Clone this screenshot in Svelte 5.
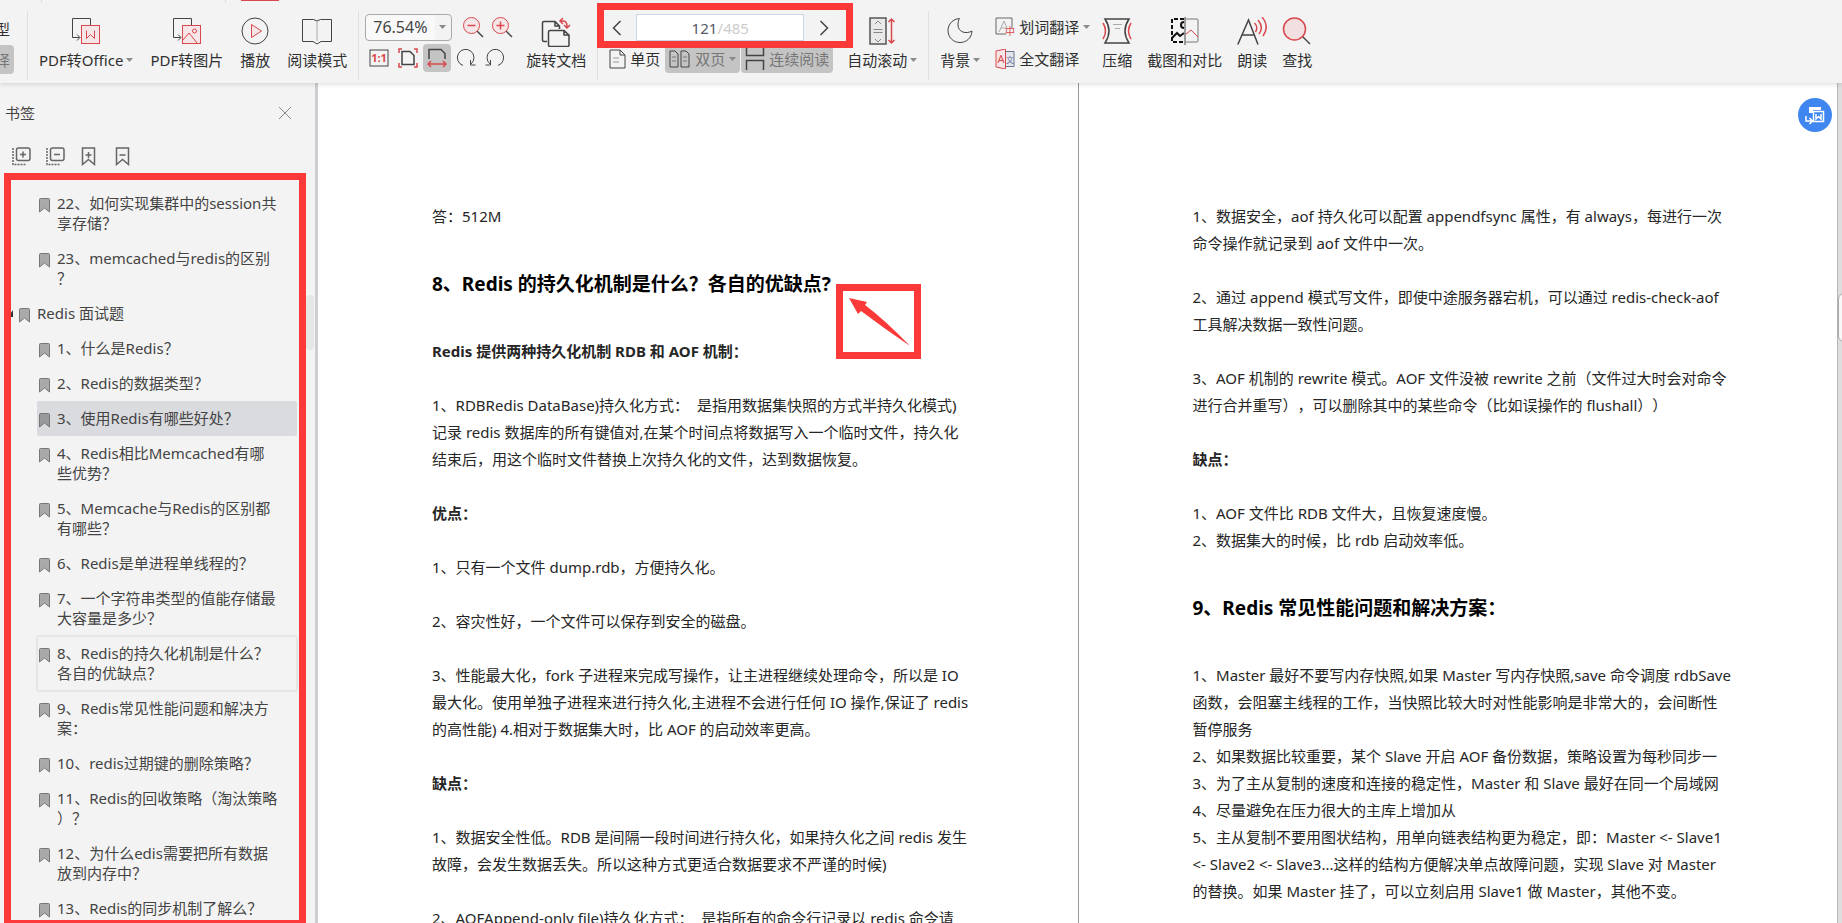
<!--
  PDF reader: ribbon toolbar, bookmark sidebar and a two-page spread
-->

<script lang="ts">
  type Bookmark = { text: string; root?: boolean };
  type Block = { kind: 'p' | 'strong' | 'h2'; text: string };

  let selected = $state(5);
  let zoom = $state('76.54%');
  let page = $state('121');
  const current = 10;

  const bookmarks: Bookmark[] = [
    { text: '22、如何实现集群中的session共\n享存储？' },
    { text: '23、memcached与redis的区别\n？' },
    { text: 'Redis 面试题', root: true },
    { text: '1、什么是Redis？' },
    { text: '2、Redis的数据类型？' },
    { text: '3、使用Redis有哪些好处？' },
    { text: '4、Redis相比Memcached有哪\n些优势？' },
    { text: '5、Memcache与Redis的区别都\n有哪些？' },
    { text: '6、Redis是单进程单线程的？' },
    { text: '7、一个字符串类型的值能存储最\n大容量是多少？' },
    { text: '8、Redis的持久化机制是什么？\n各自的优缺点？' },
    { text: '9、Redis常见性能问题和解决方\n案：' },
    { text: '10、redis过期键的删除策略？' },
    { text: '11、Redis的回收策略（淘汰策略\n）？' },
    { text: '12、为什么edis需要把所有数据\n放到内存中？' },
    { text: '13、Redis的同步机制了解么？' }
  ];

  const leftPage: Block[] = [
    { kind: 'p', text: '答：512M' },
    { kind: 'h2', text: '8、Redis 的持久化机制是什么？各自的优缺点?' },
    { kind: 'strong', text: 'Redis 提供两种持久化机制 RDB 和 AOF 机制：' },
    {
      kind: 'p',
      text: '1、RDBRedis DataBase)持久化方式：  是指用数据集快照的方式半持久化模式)\n记录 redis 数据库的所有键值对,在某个时间点将数据写入一个临时文件，持久化\n结束后，用这个临时文件替换上次持久化的文件，达到数据恢复。'
    },
    { kind: 'strong', text: '优点：' },
    { kind: 'p', text: '1、只有一个文件 dump.rdb，方便持久化。' },
    { kind: 'p', text: '2、容灾性好，一个文件可以保存到安全的磁盘。' },
    {
      kind: 'p',
      text: '3、性能最大化，fork 子进程来完成写操作，让主进程继续处理命令，所以是 IO\n最大化。使用单独子进程来进行持久化,主进程不会进行任何 IO 操作,保证了 redis\n的高性能) 4.相对于数据集大时，比 AOF 的启动效率更高。'
    },
    { kind: 'strong', text: '缺点：' },
    {
      kind: 'p',
      text: '1、数据安全性低。RDB 是间隔一段时间进行持久化，如果持久化之间 redis 发生\n故障，会发生数据丢失。所以这种方式更适合数据要求不严谨的时候)'
    },
    { kind: 'p', text: '2、AOFAppend-only file)持久化方式：  是指所有的命令行记录以 redis 命令请' }
  ];

  const rightPage: Block[] = [
    {
      kind: 'p',
      text: '1、数据安全，aof 持久化可以配置 appendfsync 属性，有 always，每进行一次\n命令操作就记录到 aof 文件中一次。'
    },
    {
      kind: 'p',
      text: '2、通过 append 模式写文件，即使中途服务器宕机，可以通过 redis-check-aof\n工具解决数据一致性问题。'
    },
    {
      kind: 'p',
      text: '3、AOF 机制的 rewrite 模式。AOF 文件没被 rewrite 之前（文件过大时会对命令\n进行合并重写），可以删除其中的某些命令（比如误操作的 flushall））'
    },
    { kind: 'strong', text: '缺点：' },
    { kind: 'p', text: '1、AOF 文件比 RDB 文件大，且恢复速度慢。\n2、数据集大的时候，比 rdb 启动效率低。' },
    { kind: 'h2', text: '9、Redis 常见性能问题和解决方案：' },
    {
      kind: 'p',
      text: '1、Master 最好不要写内存快照,如果 Master 写内存快照,save 命令调度 rdbSave\n函数，会阻塞主线程的工作，当快照比较大时对性能影响是非常大的，会间断性\n暂停服务\n2、如果数据比较重要，某个 Slave 开启 AOF 备份数据，策略设置为每秒同步一\n3、为了主从复制的速度和连接的稳定性，Master 和 Slave 最好在同一个局域网\n4、尽量避免在压力很大的主库上增加从\n5、主从复制不要用图状结构，用单向链表结构更为稳定，即：Master <- Slave1\n<- Slave2 <- Slave3...这样的结构方便解决单点故障问题，实现 Slave 对 Master\n的替换。如果 Master 挂了，可以立刻启用 Slave1 做 Master，其他不变。'
    }
  ];
</script>

{#snippet caret()}
  <svg class="caret" width="7" height="4" viewBox="0 0 7 4"><path d="M0 0h7L3.5 4z" fill="#8a8a8a" /></svg>
{/snippet}

{#snippet blocks(items: Block[])}
  {#each items as block}
    {#if block.kind === 'h2'}
      <h2>{block.text}</h2>
    {:else}
      <p class:strong={block.kind === 'strong'}>{block.text}</p>
    {/if}
  {/each}
{/snippet}

<div class="app">
  <header class="toolbar">
    <div class="tab-strip"><i class="tick"></i><i class="tick"></i><i class="tab-mark"></i></div>

    <div class="cut">
      <button class="line"><span>型</span></button>
      <button class="line pressed"><span>译</span></button>
    </div>
    <i class="sep"></i>

    <div class="group">
      <button class="tool">
        <svg width="28" height="28" viewBox="0 0 28 28">
          <path d="M18.5 8V1.5h-18v19h7M5 17.500l3 3-3 3" class="ink" />
          <rect x="9.500" y="8.500" width="18" height="18" class="red tint" />
          <path d="M14.500 13.500v8l4-4 4 4v-8" class="red" />
        </svg>
        <span class="label">PDF转Office{@render caret()}</span>
      </button>
      <button class="tool">
        <svg width="28" height="28" viewBox="0 0 28 28">
          <path d="M18.500 8V1.500h-18v19h7M5 17.500l3 3-3 3" class="ink" />
          <rect x="9.500" y="8.500" width="18" height="18" class="red tint" />
          <path d="M10 23l6-7 8 10" class="red" />
          <circle cx="21.500" cy="14" r="2" class="red" />
        </svg>
        <span class="label">PDF转图片</span>
      </button>
      <button class="tool">
        <svg width="28" height="28" viewBox="0 0 28 28">
          <circle cx="14" cy="14" r="13" class="ink" />
          <path d="M10.500 7.500v13l10-6.500z" class="red tint" />
        </svg>
        <span class="label">播放</span>
      </button>
      <button class="tool">
        <svg width="30" height="28" viewBox="0 0 30 28">
          <path d="M.5 2.500h11l3.500 1.500 3.500-1.500h11v22H19l-4 2.500-4-2.500H.5z" class="ink" />
          <path d="M15 4v20" stroke="#aaa" fill="none" />
        </svg>
        <span class="label">阅读模式</span>
      </button>
    </div>
    <i class="sep"></i>

    <div class="zoom">
      <div class="row">
        <div class="select-box">
          <select aria-label="缩放" bind:value={zoom}>
            <option>76.54%</option>
            <option>100%</option>
          </select>
          {@render caret()}
        </div>
        <button class="mini" aria-label="缩小">
          <svg width="22" height="22" viewBox="0 0 22 22">
            <path d="M15 15l6 6" class="ink thick" /><circle cx="9.500" cy="9.500" r="8" class="red tint" /><path d="M5.500 9.500h8" class="red thick" />
          </svg>
        </button>
        <button class="mini" aria-label="放大">
          <svg width="22" height="22" viewBox="0 0 22 22">
            <path d="M15 15l6 6" class="ink thick" /><circle cx="9.500" cy="9.500" r="8" class="red tint" /><path d="M5.500 9.500h8M9.500 5.500v8" class="red thick" />
          </svg>
        </button>
      </div>
      <div class="row fit">
        <button class="mini" aria-label="实际大小">
          <svg width="20" height="18" viewBox="0 0 20 18">
            <rect x="1" y="1" width="18" height="16" class="ink" />
            <text x="10" y="13" text-anchor="middle" font-size="11" font-weight="700" fill="#d9484c">1:1</text>
          </svg>
        </button>
        <button class="mini" aria-label="适合页面">
          <svg width="20" height="20" viewBox="0 0 20 20">
            <path d="M4 3.500h8l4 4v9H4z" class="ink thick" />
            <path d="M1 5V1h3M16 1h3v4M19 15v4h-3M4 19H1v-4" class="red thick" />
          </svg>
        </button>
        <button class="mini on" aria-label="适合宽度">
          <svg width="20" height="20" viewBox="0 0 20 20">
            <path d="M2 11V1.500h12l4 4V11" class="ink thick" />
            <path d="M1 16h18M4 13l-3 3 3 3M16 13l3 3-3 3" class="red thick" />
          </svg>
        </button>
        <button class="mini" aria-label="顺时针旋转">
          <svg width="20" height="20" viewBox="0 0 20 20"><path d="M7 17.500A8.300 8.300 0 1 1 15 16M14.500 12v5h5" class="ink" /></svg>
        </button>
        <button class="mini" aria-label="逆时针旋转">
          <svg width="20" height="20" viewBox="0 0 20 20"><path d="M13 17.500A8.300 8.300 0 1 0 5 16M5.500 12v5h-5" class="ink" /></svg>
        </button>
      </div>
    </div>

    <button class="tool rotate">
      <svg width="30" height="30" viewBox="0 0 30 30">
        <path d="M6 24.500H3q-1.500 0-1.500-1.500V6q0-1.500 1.500-1.500h11l4.500 4.500v3M14 4.500V9h4.500" class="ink thick" />
        <path d="M7.500 15q0-1.500 1.500-1.500h14l5 4.500v10q0 1.500-1.500 1.500H9q-1.500 0-1.500-1.500zM23 13.500V18h5" class="ink thick" />
        <path d="M19 4h3q4 0 4 5v2M22 1l-3 3 3 3M23 8l3 3 3-3" class="red thick" />
      </svg>
      <span class="label">旋转文档</span>
    </button>
    <i class="sep"></i>

    <div class="nav">
      <div class="pager">
        <button class="step" aria-label="上一页">
          <svg width="10" height="16" viewBox="0 0 10 16"><path d="M8.500 1l-7 7 7 7" class="ink thick" /></svg>
        </button>
        <label class="page-box">
          <input aria-label="页码" bind:value={page} /><span>/485</span>
        </label>
        <button class="step" aria-label="下一页">
          <svg width="10" height="16" viewBox="0 0 10 16"><path d="M1.500 1l7 7-7 7" class="ink thick" /></svg>
        </button>
      </div>
      <div class="views">
        <button class="view">
          <svg width="17" height="20" viewBox="0 0 17 20">
            <path d="M1 1h10l5 5v13H1zM11 1v5h5" class="ink" /><path d="M4 9h6M4 13h6" stroke="#999" />
          </svg>
          单页
        </button>
        <button class="view pressed">
          <svg width="22" height="20" viewBox="0 0 22 20">
            <path d="M1 2h5l3 3v13H1zM12 2h5l3 3v13h-8z" class="ink" /><path d="M3 8h4M3 12h4M14 8h4M14 12h4" stroke="#777" />
          </svg>
          双页{@render caret()}
        </button>
        <button class="view pressed">
          <svg width="20" height="22" viewBox="0 0 20 22">
            <path d="M1.500 0v7.500h17V0M1.500 22v-9.500h17V22" class="ink thick" />
          </svg>
          连续阅读
        </button>
      </div>
      <div class="red-frame nav-frame"></div>
    </div>

    <button class="tool">
      <svg width="26" height="28" viewBox="0 0 26 28">
        <rect x="1" y="1" width="16" height="26" fill="#e9e9e9" stroke="#555" stroke-width="1.500" />
        <path d="M4.500 12.500h9M4.500 15.500h9M6 7l3-3 3 3M6 22l3 3 3-3" stroke="#888" fill="none" />
        <path d="M22.500 2v24M19.500 5l3-3 3 3M19.500 23l3 3 3-3" class="red thick" />
      </svg>
      <span class="label">自动滚动{@render caret()}</span>
    </button>
    <i class="sep"></i>

    <div class="group tight">
      <button class="tool">
        <svg width="28" height="28" viewBox="0 0 28 28">
          <path d="M13.500 1.500C7 2 2 7 2 13.500c0 7 5.500 12 12 12 6 0 11.500-4 12-11.500-6 3.500-14 1-14-6 0-3 .5-5 1.500-6.500z" class="ink" />
        </svg>
        <span class="label">背景{@render caret()}</span>
      </button>
      <div class="translate">
        <button class="line">
          <svg width="20" height="20" viewBox="0 0 20 20">
            <path d="M11 17H1V1h16v10" stroke="#666" fill="none" /><path d="M4 15L9 4l3 7M6 11h5" stroke="#aaa" fill="none" />
            <text x="15" y="18" text-anchor="middle" font-size="10" fill="#d9484c">中</text>
          </svg>
          划词翻译{@render caret()}
        </button>
        <button class="line">
          <svg width="20" height="20" viewBox="0 0 20 20">
            <path d="M10.500 2.500H19v15h-8.500" stroke="#6a7391" fill="#e4e6ee" /><path d="M10.500 0v20L1 18V2z" class="red tint" />
            <text x="6" y="14" text-anchor="middle" font-size="11" fill="#d9484c">A</text>
            <text x="15" y="14" text-anchor="middle" font-size="8" fill="#6a7391">文</text>
          </svg>
          全文翻译
        </button>
      </div>
      <button class="tool">
        <svg width="30" height="28" viewBox="0 0 30 28">
          <path d="M3 2h24q-8 12 0 24H3q8-12 0-24z" class="ink thick" />
          <path d="M11 7.500h9M13 11.500h5" stroke="#aaa" />
          <path d="M1 6q5 8 0 16M29 6q-5 8 0 16" class="red thick" />
        </svg>
        <span class="label">压缩</span>
      </button>
      <button class="tool">
        <svg width="28" height="28" viewBox="0 0 28 28">
          <path d="M13 2H1v23h12" stroke="#111" stroke-width="2" stroke-dasharray="4 2" fill="none" />
          <path d="M13 5a3 3 0 1 0 0 6M1 21l5-5 3 3 4-3" stroke="#111" stroke-width="2" fill="none" />
          <path d="M14.500 2H26q1 0 1 1v21q0 1-1 1H14.500" stroke="#777" fill="none" />
          <path d="M14 0v28" stroke="#444" /><path d="M15 17l5-4 7 7" class="red" />
        </svg>
        <span class="label">截图和对比</span>
      </button>
      <button class="tool">
        <svg width="30" height="28" viewBox="0 0 30 28">
          <path d="M.8 27.500L11.500 3 21 27.500M5 18h12.500" class="ink thick" />
          <path d="M17.500 6q4 4 1 9M21 3q6 7 1 14M25 0q8 9 1 19" class="red thick" />
        </svg>
        <span class="label">朗读</span>
      </button>
      <button class="tool">
        <svg width="30" height="28" viewBox="0 0 30 28">
          <path d="M20 19l8 8" class="ink thick" /><circle cx="12.500" cy="12" r="11" fill="#f2e0e1" stroke="#d9484c" stroke-width="1.500" />
        </svg>
        <span class="label">查找</span>
      </button>
    </div>
  </header>

  <div class="body">
    <aside class="sidebar">
      <div class="side-head">
        <span>书签</span>
        <button aria-label="关闭">
          <svg width="14" height="14" viewBox="0 0 14 14"><path d="M1 1l12 12M13 1L1 13" stroke="#888" fill="none" /></svg>
        </button>
      </div>
      <div class="side-tools">
        <button aria-label="全部展开">
          <svg width="19" height="19" viewBox="0 0 19 19" class="gray">
            <rect x="4.500" y="1" width="13.500" height="12.500" rx="2" /><path d="M11 4.500v6M8 7.500h6" /><path d="M1 1v16.500h13" stroke-dasharray="2 1" />
          </svg>
        </button>
        <button aria-label="全部收起">
          <svg width="19" height="19" viewBox="0 0 19 19" class="gray">
            <rect x="4.500" y="1" width="13.500" height="12.500" rx="2" /><path d="M8 7.500h6" /><path d="M1 1v16.500h13" stroke-dasharray="2 1" />
          </svg>
        </button>
        <button aria-label="添加书签">
          <svg width="19" height="19" viewBox="0 0 19 19" class="gray">
            <path d="M2.500 1h12v16.500l-6-5-6 5zM8.500 5v6M5.500 8h6" />
          </svg>
        </button>
        <button aria-label="删除书签">
          <svg width="19" height="19" viewBox="0 0 19 19" class="gray">
            <path d="M2.500 1h12v16.500l-6-5-6 5zM5.500 8h6" />
          </svg>
        </button>
      </div>

      <div class="tree">
        <ul>
          {#each bookmarks as item, i}
            <li class:root={item.root}>
              {#if item.root}
                <svg class="twist" width="5" height="7" viewBox="0 0 5 7"><path d="M5 0v7H0z" fill="#333" /></svg>
              {/if}
              <button
                class="mark"
                class:selected={selected === i}
                class:current={current === i}
                onclick={() => (selected = i)}
              >
                <svg width="11" height="15" viewBox="0 0 11 15">
                  <path d="M.5 14V1.500q0-1 1-1h8q1 0 1 1V14l-5-4z" fill="#000" fill-opacity=".3" stroke="#777" />
                </svg>
                <span>{item.text}</span>
              </button>
            </li>
          {/each}
        </ul>
        <i class="thumb"></i>
        <div class="red-frame tree-frame"></div>
      </div>
    </aside>

    <main class="spread">
      <article class="page">
        {@render blocks(leftPage)}
        <div class="red-frame arrow-frame">
          <svg width="71" height="61" viewBox="0 0 71 61">
            <path d="M6 7l18 4-2 3q20 15 45 41Q42 38 18 20l-3 3z" fill="#fb3939" />
          </svg>
        </div>
      </article>
      <article class="page">
        {@render blocks(rightPage)}
        <button class="float" aria-label="PDF转Office">
          <svg width="20" height="20" viewBox="0 0 20 20">
            <path d="M4 2h12v3H8v3H4z" fill="#fff" />
            <rect x="8.500" y="6.500" width="10" height="10" fill="#3f86f0" stroke="#fff" stroke-width="1.500" />
            <path d="M11 9v5l2.500-2.500L16 14V9M1 11v5h6M4.500 13l3 3-3 3" fill="none" stroke="#fff" stroke-width="1.500" />
          </svg>
        </button>
      </article>
    </main>
    <div class="scroll"><i></i></div>
  </div>
</div>

<style>
  :global(body) {
    margin: 0;
    overflow: hidden;
  }

  .app {
    display: flex;
    flex-direction: column;
    height: 100vh;
    background: #f3f3f3;
    color: #303030;
    font: 15px/20px 'Noto Sans', 'Noto Sans CJK SC', sans-serif;
    text-spacing-trim: space-all;
  }

  button {
    padding: 0;
    border: 0;
    background: none;
    color: inherit;
    font: inherit;
  }

  svg {
    flex: none;
    display: block;
  }

  .ink {
    fill: none;
    stroke: #444;
  }

  .red {
    fill: none;
    stroke: #d9484c;
  }

  .tint {
    fill: #f7e6e7;
  }

  .thick {
    stroke-width: 1.5;
  }

  .red-frame {
    position: absolute;
    box-sizing: border-box;
    border: 7px solid #fb3939;
    pointer-events: none;
    z-index: 5;
  }

  /* toolbar */
  .toolbar {
    position: relative;
    z-index: 2;
    flex: none;
    display: flex;
    height: 83px;
    box-shadow: 0 1px 5px rgba(0, 0, 0, 0.15);
    background: #f3f3f3;
    white-space: nowrap;
  }

  .tab-strip .tick,
  .tab-mark {
    position: absolute;
    top: 0;
    left: 41px;
    width: 1px;
    height: 3px;
    background: #ddd;
  }

  .tab-strip .tick + .tick {
    left: 225px;
  }

  .tab-strip .tab-mark {
    left: 241px;
    width: 38px;
    height: 1px;
    background: #d9484c;
  }

  .sep {
    flex: none;
    width: 1px;
    height: 69px;
    margin: 11px 11px 0;
    background: #e0e0e0;
  }

  .cut {
    display: flex;
    flex-direction: column;
    align-items: flex-end;
    gap: 2px;
    width: 14px;
    margin-right: 2px;
    padding-top: 14px;
  }

  .cut .line {
    padding-right: 4px;
  }

  .line {
    display: flex;
    align-items: center;
    gap: 4px;
    height: 29px;
  }

  .pressed {
    border-radius: 4px;
    background: #c4c4c4;
    color: #777;
  }

  .group {
    display: flex;
    gap: 17px;
  }

  .tight {
    gap: 15px;
  }

  .tool {
    flex: none;
    display: flex;
    flex-direction: column;
    align-items: center;
    justify-content: space-between;
    height: 53px;
    margin-top: 17px;
  }

  .label {
    display: flex;
    align-items: center;
  }

  .caret {
    margin-left: 3px;
  }

  .zoom {
    display: flex;
    flex-direction: column;
    gap: 3px;
    width: 142px;
    padding-top: 13px;
    margin-left: -5px;
  }

  .row {
    display: flex;
    align-items: center;
    gap: 7px;
  }

  .fit {
    gap: 1px;
  }

  .select-box {
    position: relative;
    flex: none;
    display: flex;
    align-items: center;
    box-sizing: border-box;
    width: 87px;
    height: 27px;
    margin-right: 3px;
    border: 1px solid #aaa;
    border-radius: 4px;
    background: linear-gradient(90deg, #f9f9f9 69px, #f3f3f3 69px);
  }

  select {
    width: 100%;
    padding: 0 0 0 7px;
    border: 0;
    background: none;
    color: #444;
    font: inherit;
    font-size: 16px;
    appearance: none;
  }

  .select-box :global(.caret) {
    position: absolute;
    right: 5px;
  }

  .mini {
    display: flex;
    align-items: center;
    justify-content: center;
    height: 28px;
    border-radius: 4px;
  }

  .fit .mini {
    flex: none;
    width: 28px;
  }

  .on {
    background: #c4c4c4;
  }

  .rotate {
    margin-left: 19px;
  }

  .nav {
    position: relative;
    width: 234px;
    margin-right: 16px;
    margin-left: -12px;
  }

  .pager {
    display: flex;
    align-items: center;
    height: 27px;
    margin-top: 14px;
  }

  .step {
    flex: none;
    display: flex;
    justify-content: center;
    width: 39px;
  }

  .page-box {
    flex: none;
    display: flex;
    align-items: center;
    justify-content: center;
    box-sizing: border-box;
    width: 168px;
    height: 27px;
    border: 1px solid #ccd5e6;
    background: #fff;
    color: #ccc;
  }

  input {
    width: 26px;
    padding: 0;
    border: 0;
    outline: 0;
    background: none;
    color: #555a66;
    font: inherit;
  }

  .views {
    display: flex;
    gap: 1px;
    margin-top: 4px;
    padding-left: 8px;
  }

  .view {
    flex: none;
    display: flex;
    align-items: center;
    gap: 4px;
    height: 28px;
    padding: 0 4px;
  }

  .view .caret {
    margin-left: 0;
  }

  .nav-frame {
    top: 3px;
    left: 0;
    width: 256px;
    height: 45px;
  }

  .translate {
    display: flex;
    flex-direction: column;
    gap: 3px;
    margin: 12px -3px 0 0;
  }

  .translate .caret {
    margin-left: 0;
  }

  .body {
    flex: 1;
    display: flex;
    min-height: 0;
  }

  /* bookmarks */
  .sidebar {
    flex: none;
    display: flex;
    flex-direction: column;
    width: 315px;
    border-right: 3px solid #cdcdd2;
    color: #444;
  }

  .side-head {
    flex: none;
    display: flex;
    align-items: center;
    justify-content: space-between;
    height: 60px;
    padding: 0 23px 0 5px;
  }

  .side-tools {
    flex: none;
    display: flex;
    align-items: center;
    gap: 15px;
    height: 26px;
    margin-bottom: 4px;
    padding-left: 12px;
  }

  .gray {
    fill: none;
    stroke: #666;
    stroke-width: 1.5;
  }

  .tree {
    position: relative;
    flex: 1;
    min-height: 0;
    padding-top: 13px;
  }

  ul {
    height: 100%;
    margin: 0;
    padding: 0;
    overflow: hidden;
    list-style: none;
  }

  li {
    display: flex;
    align-items: center;
    padding: 0 18px 0 37px;
  }

  .root {
    padding-left: 8px;
  }

  .root .mark {
    margin-left: 4px;
  }

  .mark {
    flex: 1;
    display: flex;
    align-items: flex-start;
    gap: 7px;
    padding: 7px 2px 8px;
    border-radius: 2px;
    text-align: left;
    white-space: pre;
  }

  .mark svg {
    margin-top: 5px;
  }

  .selected {
    background: #dadbdf;
  }

  .current {
    box-shadow: 0 0 0 1px #e6e6e6, inset 0 0 0 1px #e6e6e6;
  }

  .thumb {
    position: absolute;
    top: 122px;
    right: 1px;
    width: 8px;
    height: 55px;
    border-radius: 4px;
    background: #e6e6e6;
  }

  .tree-frame {
    inset: 0 9px -4px 4px;
  }

  /* pages */
  .spread {
    flex: 1;
    display: grid;
    grid-template-columns: 1fr 1fr;
    min-width: 0;
    background: #fff;
  }

  .page {
    position: relative;
    min-width: 0;
    padding: 120px 0 0 114px;
    overflow: hidden;
    color: #262626;
    line-height: 27px;
    white-space: pre;
  }

  .page + .page {
    border-left: 1px solid #999;
  }

  p {
    margin: 0 0 27px;
  }

  .strong {
    font-weight: 700;
  }

  h2 {
    margin: 41px 0 40px;
    color: #000;
    font-size: 19px;
    line-height: 27px;
  }

  .arrow-frame {
    top: 201px;
    left: 518px;
  }

  .float {
    position: absolute;
    top: 15px;
    right: 5px;
    display: flex;
    align-items: center;
    justify-content: center;
    width: 34px;
    height: 34px;
    border-radius: 50%;
    background: #3f86f0;
  }

  .scroll {
    flex: none;
    width: 4px;
    border-left: 1px solid #b5b5b5;
    background: #dedede;
    overflow: hidden;
  }

  .scroll i {
    display: block;
    box-sizing: border-box;
    width: 14px;
    height: 49px;
    margin-top: 210px;
    border: 1px solid #aaa;
    border-radius: 6px;
    background: #f8f8f8;
  }
</style>
